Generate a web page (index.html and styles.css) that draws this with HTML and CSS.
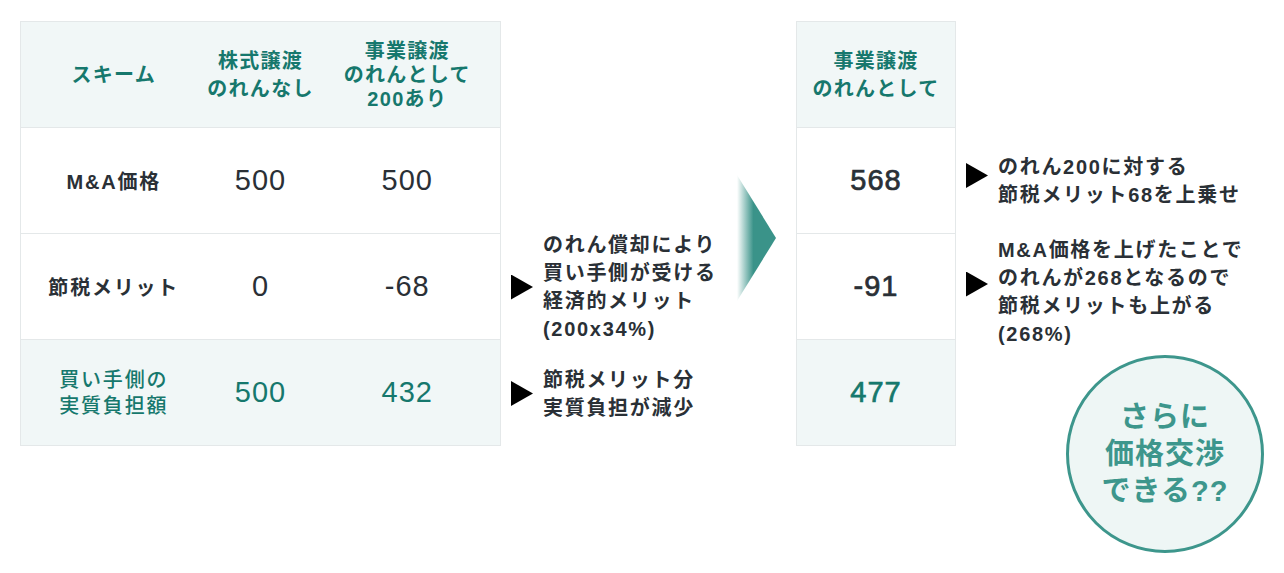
FILE: index.html
```html
<!DOCTYPE html>
<html lang="ja">
<head>
<meta charset="utf-8">
<title>のれん節税メリット</title>
<link rel="stylesheet" href="styles.css">
</head>
<body>
<main class="page">
  <table class="tbl tbl-main">
    <colgroup><col class="c1"><col class="c2"><col class="c3"></colgroup>
    <tr class="head">
      <th>スキーム</th>
      <th>株式譲渡<br>のれんなし</th>
      <th class="tight">事業譲渡<br>のれんとして<br>200あり</th>
    </tr>
    <tr>
      <td class="label">M&amp;A価格</td>
      <td class="num">500</td>
      <td class="num">500</td>
    </tr>
    <tr>
      <td class="label">節税メリット</td>
      <td class="num">0</td>
      <td class="num">-68</td>
    </tr>
    <tr class="total">
      <td class="label label-sub">買い手側の<br>実質負担額</td>
      <td class="num">500</td>
      <td class="num">432</td>
    </tr>
  </table>

  <div class="notes-mid">
    <div class="note note-a">
      <span class="tri"></span>
      <p>のれん償却により<br>買い手側が受ける<br>経済的メリット<br>(200x34%)</p>
    </div>
    <div class="note note-b">
      <span class="tri"></span>
      <p>節税メリット分<br>実質負担が減少</p>
    </div>
  </div>

  <div class="arrow">
    <svg width="40" height="126" viewBox="0 0 40 126">
      <defs>
        <linearGradient id="ag" x1="0" x2="1" y1="0" y2="0">
          <stop offset="0" stop-color="#3a9389" stop-opacity="0"/>
          <stop offset="0.42" stop-color="#3a9389" stop-opacity="1"/>
          <stop offset="1" stop-color="#3a9389" stop-opacity="1"/>
        </linearGradient>
      </defs>
      <polygon points="0,0 39,63 0,126" fill="url(#ag)"/>
    </svg>
  </div>

  <table class="tbl tbl-result">
    <tr class="head">
      <th>事業譲渡<br>のれんとして</th>
    </tr>
    <tr><td class="num strong">568</td></tr>
    <tr><td class="num strong">-91</td></tr>
    <tr class="total"><td class="num strong">477</td></tr>
  </table>

  <div class="side">
    <div class="note note-c">
      <span class="tri"></span>
      <p>のれん200に対する<br>節税メリット68を上乗せ</p>
    </div>
    <div class="note note-d">
      <span class="tri"></span>
      <p>M&amp;A価格を上げたことで<br>のれんが268となるので<br>節税メリットも上がる<br>(268%)</p>
    </div>
    <div class="badge">さらに<br>価格交渉<br>できる??</div>
  </div>
</main>
</body>
</html>
```

FILE: styles.css
```css
* { box-sizing: border-box; }

html, body {
  margin: 0;
  padding: 0;
  background: #ffffff;
}

body {
  font-family: "Liberation Sans", "Noto Sans CJK JP", sans-serif;
  color: #2a3036;
}

.page {
  display: flex;
  align-items: flex-start;
  padding: 21px 20px 0 20px;
  width: 1284px;
  height: 573px;
}

/* tables */
.tbl {
  border-collapse: collapse;
  border: 1px solid #e4e8e9;
  table-layout: fixed;
}

.tbl tr { height: 106px; }

.tbl th,
.tbl td {
  border-top: 1px solid #e4e8e9;
  border-bottom: 1px solid #e4e8e9;
  padding: 0;
  text-align: center;
  vertical-align: middle;
}

.tbl-main { width: 480px; }
.tbl-main .c1 { width: 186px; }
.tbl-main .c2 { width: 108px; }
.tbl-main .c3 { width: 186px; }

.tbl-result {
  width: 160px;
  margin-left: 19px;
}

.head { background: #f1f7f7; }

.head th {
  color: #16786d;
  font-size: 20px;
  font-weight: 700;
  line-height: 28px;
  letter-spacing: 1.3px;
}

.head th.tight { line-height: 24px; }

.label {
  font-size: 20px;
  font-weight: 700;
  letter-spacing: 1.8px;
  color: #2a3036;
}

.label-sub {
  font-weight: 500;
  line-height: 26px;
  letter-spacing: 1.8px;
}

.num {
  font-size: 29px;
  font-weight: 400;
  letter-spacing: 1px;
  color: #2a3036;
}

.num.strong {
  font-weight: 400;
  font-size: 29px;
  -webkit-text-stroke: 0.7px currentColor;
}

.total { background: #f1f7f7; }
.total td { color: #16786d; }

/* notes */
.note {
  display: flex;
  align-items: center;
  gap: 10px;
}

.note p {
  margin: 0;
  font-size: 20px;
  font-weight: 700;
  line-height: 28px;
  letter-spacing: 1.7px;
  color: #2a3036;
  white-space: nowrap;
}

.tri {
  flex: none;
  width: 22px;
  height: 25px;
  background: #000;
  clip-path: polygon(0 0, 100% 50%, 0 100%);
}

.notes-mid {
  width: 226px;
  margin-left: 10px;
  display: grid;
  grid-template-rows: 106px 106px 106px 106px;
  align-items: center;
}

.note-a { grid-row: 3; margin-top: 2px; }
.note-b { grid-row: 4; margin-top: 3px; }

.arrow {
  width: 40px;
  margin-top: 154px;
  line-height: 0;
}

.side {
  flex: 1;
  margin-left: 10px;
  display: flex;
  flex-direction: column;
  padding-top: 132px;
}

.note-c .tri { margin-top: -11px; }
.note-d { margin-top: 27px; }
.note-d .tri { margin-top: -16px; }

.badge {
  align-self: flex-end;
  width: 198px;
  height: 198px;
  margin-top: 7px;
  border: 3px solid #3d968c;
  border-radius: 50%;
  background: #eef6f5;
  color: #3d968c;
  font-size: 29px;
  font-weight: 700;
  line-height: 37px;
  letter-spacing: 1px;
  text-align: center;
  display: flex;
  align-items: center;
  justify-content: center;
}
```
